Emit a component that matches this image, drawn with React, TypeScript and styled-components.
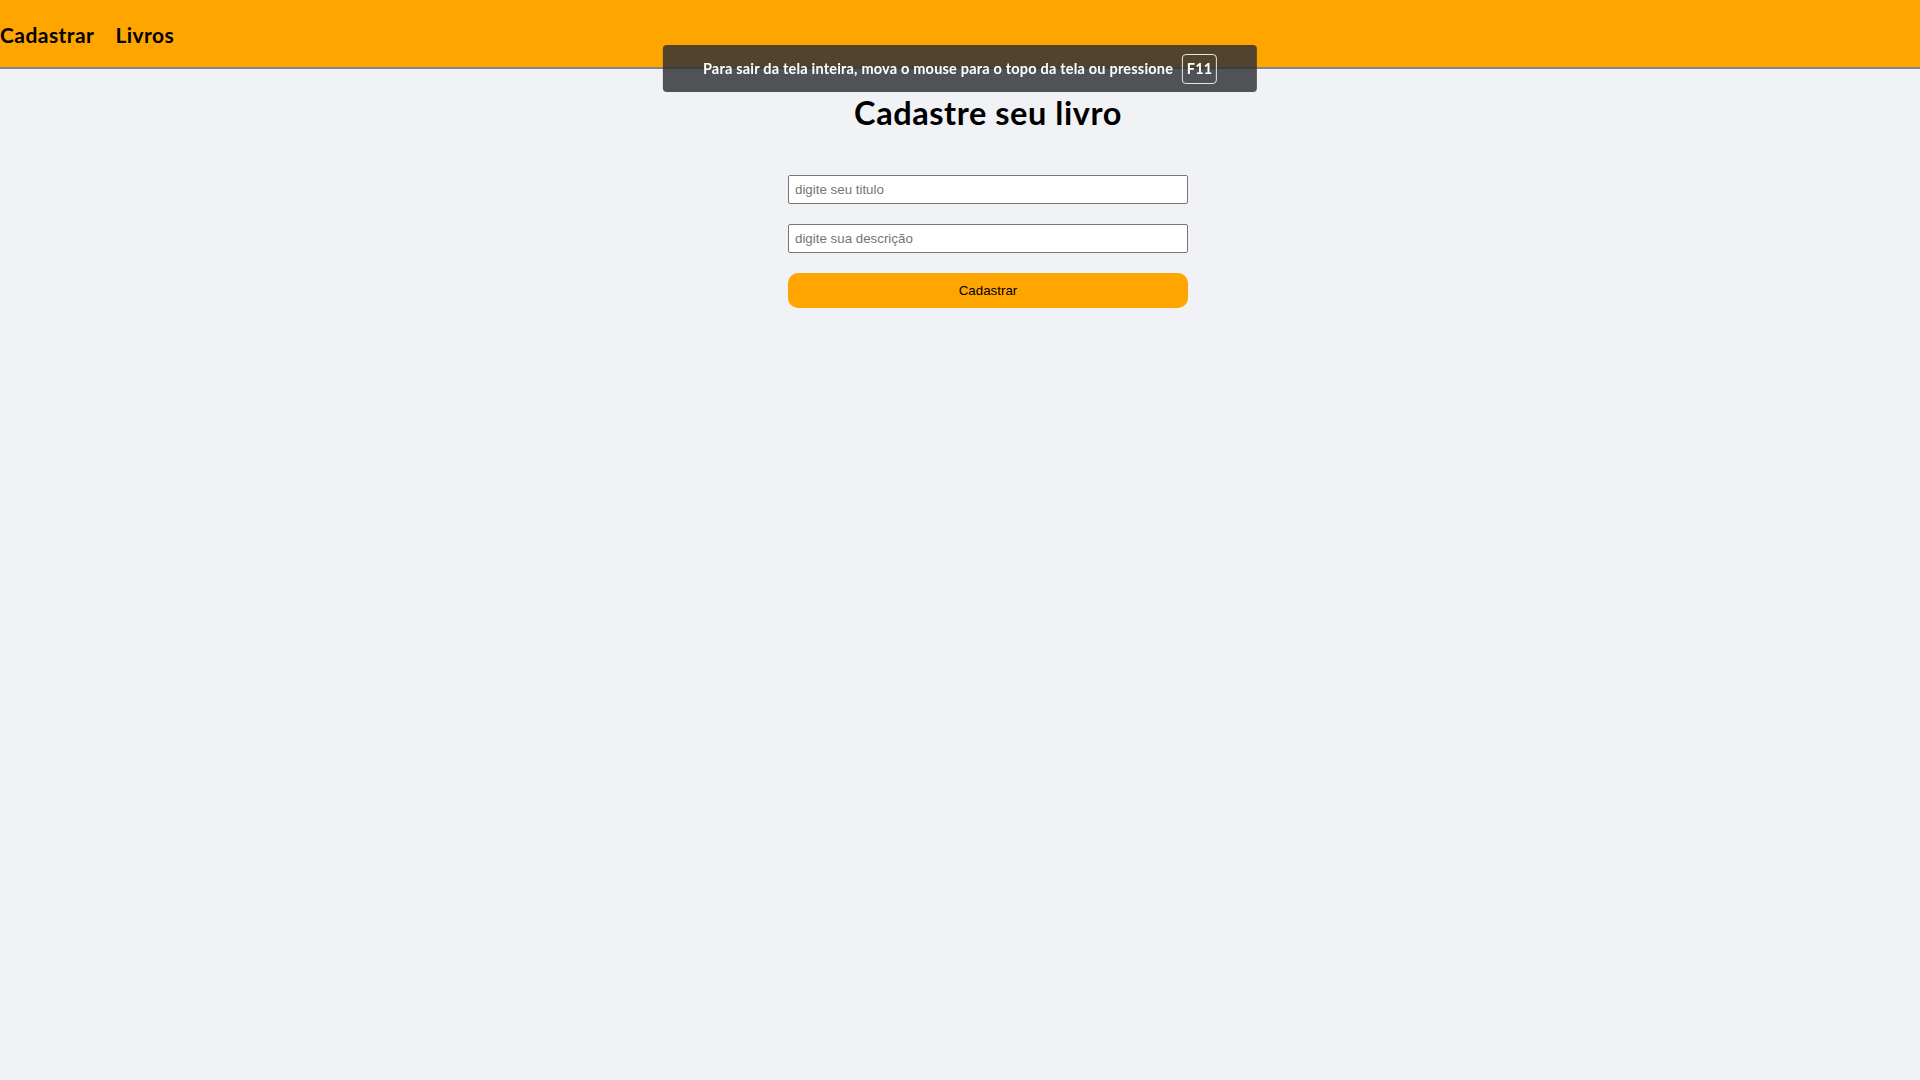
import React from "react";
import styled, { createGlobalStyle } from "styled-components";

const GlobalStyle = createGlobalStyle`
  * { box-sizing: border-box; }
  html, body { margin: 0; padding: 0; }
  body {
    background: #f0f2f5;
    font-family: "Lato", "Liberation Sans", sans-serif;
    min-height: 1080px;
  }
`;

const Header = styled.header`
  height: 69px;
  background: #ffa500;
  border-bottom: 2px solid #858585;
  display: flex;
  align-items: center;
  gap: 21px;
  padding: 1px 0 0 0;
`;

const NavLink = styled.a`
  font-family: "Lato", sans-serif;
  font-weight: 700;
  font-size: 21px;
  letter-spacing: 0.45px;
  color: #000;
  text-decoration: none;
  cursor: pointer;
`;

const Main = styled.main`
  display: flex;
  flex-direction: column;
  align-items: center;
  padding-left: 56px;
`;

const Title = styled.h1`
  font-family: "Lato", sans-serif;
  font-weight: 700;
  font-size: 32.5px;
  letter-spacing: 0.55px;
  line-height: 37px;
  margin: 25px 0 0 0;
  color: #000;
`;

const Form = styled.form`
  width: 400px;
  display: flex;
  flex-direction: column;
  gap: 20px;
  margin-top: 44px;
`;

const Input = styled.input`
  width: 400px;
  height: 29px;
  border: 1px solid #767676;
  border-radius: 2px;
  background: #fff;
  padding: 0 6px;
  font-family: "Liberation Sans", Arial, sans-serif;
  font-size: 13.333px;
  color: #000;
  &::placeholder { color: #757575; }
`;

const Button = styled.button`
  width: 400px;
  height: 35px;
  border: none;
  border-radius: 10px;
  background: #ffa500;
  font-family: "Liberation Sans", Arial, sans-serif;
  font-size: 13.333px;
  color: #000;
  cursor: pointer;
`;

const Toast = styled.div`
  position: fixed;
  top: 45px;
  left: 50%;
  transform: translateX(-50%);
  height: 47px;
  padding: 0 40px;
  display: flex;
  align-items: center;
  gap: 9px;
  background: rgba(44, 46, 54, 0.82);
  border-radius: 4px;
  color: #fff;
  font-family: "Lato", sans-serif;
  font-weight: 700;
  font-size: 14.5px;
  letter-spacing: 0.2px;
  white-space: nowrap;
`;

const Key = styled.span`
  display: inline-flex;
  align-items: center;
  justify-content: center;
  width: 35px;
  height: 30px;
  border: 1px solid #e6e6e6;
  border-radius: 4px;
  font-size: 14.5px;
  font-weight: 700;
`;

export default function App() {
  return (
    <>
      <GlobalStyle />
      <Header>
        <NavLink>Cadastrar</NavLink>
        <NavLink>Livros</NavLink>
      </Header>
      <Main>
        <Title>Cadastre seu livro</Title>
        <Form onSubmit={(e) => e.preventDefault()}>
          <Input placeholder="digite seu titulo" />
          <Input placeholder="digite sua descrição" />
          <Button type="submit">Cadastrar</Button>
        </Form>
      </Main>
      <Toast>
        Para sair da tela inteira, mova o mouse para o topo da tela ou pressione
        <Key>F11</Key>
      </Toast>
    </>
  );
}
